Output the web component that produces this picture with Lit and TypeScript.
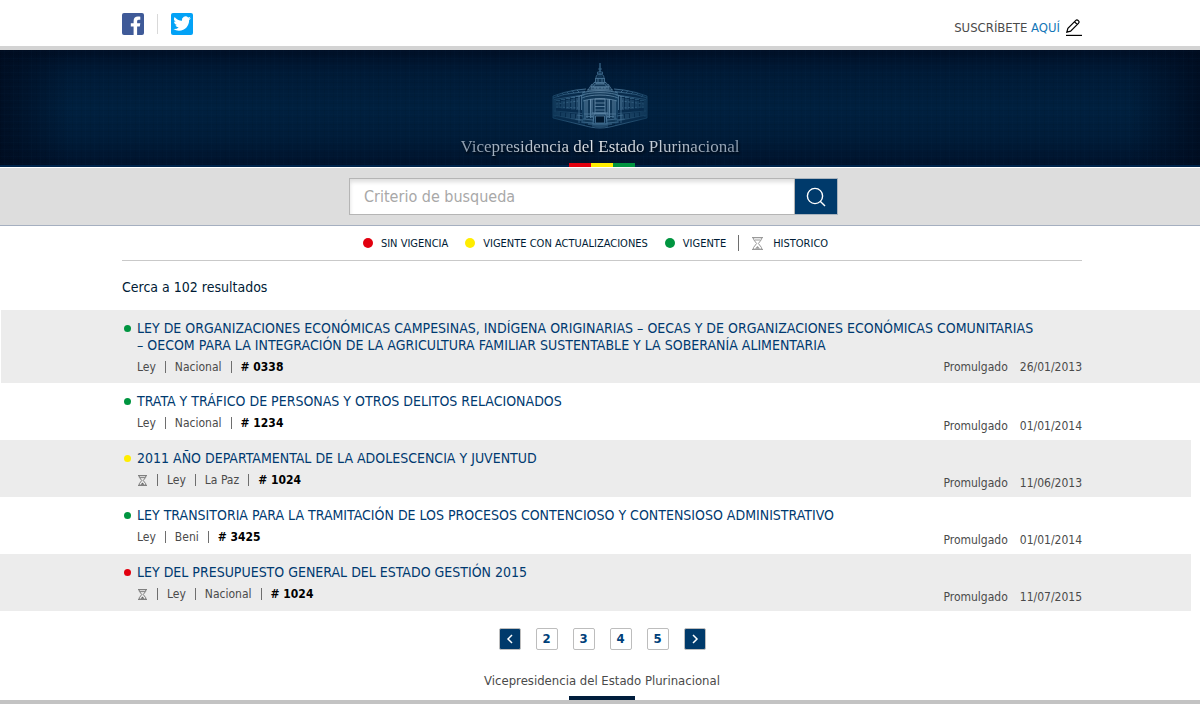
import { LitElement, html, css, svg, nothing } from "lit";
import { customElement, property } from "lit/decorators.js";

type Status = "red" | "yellow" | "green";

interface Law {
  status: Status;
  title: string;
  historic?: boolean;
  scope: string;
  number: string;
  date: string;
}

const LAWS: Law[] = [
  {
    status: "green",
    title:
      "LEY DE ORGANIZACIONES ECONÓMICAS CAMPESINAS, INDÍGENA ORIGINARIAS – OECAS Y DE ORGANIZACIONES ECONÓMICAS COMUNITARIAS – OECOM PARA LA INTEGRACIÓN DE LA AGRICULTURA FAMILIAR SUSTENTABLE Y LA SOBERANÍA ALIMENTARIA",
    scope: "Nacional",
    number: "0338",
    date: "26/01/2013",
  },
  {
    status: "green",
    title: "TRATA Y TRÁFICO DE PERSONAS Y OTROS DELITOS RELACIONADOS",
    scope: "Nacional",
    number: "1234",
    date: "01/01/2014",
  },
  {
    status: "yellow",
    title: "2011 AÑO DEPARTAMENTAL DE LA ADOLESCENCIA Y JUVENTUD",
    historic: true,
    scope: "La Paz",
    number: "1024",
    date: "11/06/2013",
  },
  {
    status: "green",
    title: "LEY TRANSITORIA PARA LA TRAMITACIÓN DE LOS PROCESOS CONTENCIOSO Y CONTENSIOSO ADMINISTRATIVO",
    scope: "Beni",
    number: "3425",
    date: "01/01/2014",
  },
  {
    status: "red",
    title: "LEY DEL PRESUPUESTO GENERAL DEL ESTADO GESTIÓN 2015",
    historic: true,
    scope: "Nacional",
    number: "1024",
    date: "11/07/2015",
  },
];

const hourglass = (size: number) => html`<svg width=${size} height=${size + 2} viewBox="0 0 11 13" fill="none" stroke="currentColor" aria-hidden="true">
  <path d="M0 .6H11M0 12.4H11" stroke-width="1.2" />
  <path d="M1.6 1V2.6L4.6 6.5L1.6 10.4V12M9.4 1V2.6L6.4 6.5L9.4 10.4V12M2.4 3H8.6" />
  <path d="M3 11.8L5.5 9L8 11.8Z" fill="currentColor" stroke="none" />
</svg>`;

@customElement("palace-logo")
class PalaceLogo extends LitElement {
  static styles = css`
    :host { display: block; line-height: 0; }
  `;

  private wing() {
    const windows = [4, 9, 14, 19, 24];
    return svg`
      <path d="M1 33L12 29.5L24 27L33 26V62.5L1 55Z" fill="#16456a" fill-opacity=".35" stroke="none" />
      <path d="M1 33L12 29.5L24 27L34 26M1 35L12 31.5L33 28.5M2 36.5L32 32M1 33V55L32 62.5M3 37V54" />
      <path d="M1 52L31 58M2 48L30 50.5" opacity=".6" />
      ${windows.map((x, i) => svg`
        <path d="M${x + 1} ${39 - i}V${45 + i * 0.5}M${x + 3} ${38.5 - i}V${45 + i * 0.5}M${x + 1} ${49 + i * 0.6}V${53 + i}M${x + 3} ${49 + i * 0.6}V${53 + i}M${x} ${37.5 - i}H${x + 4}" />
      `)}
      <path d="M5 32L7 34M10 30L12 32M15 29L17 31M20 27.5L22 30M25 27L27 29" />
      <path d="M27 33V60M29.5 32V47M25 52L31 53M23 56L31 57" />
      <path d="M4 44L26 45M4 41L26 38" stroke-dasharray="2 1.5" />
    `;
  }

  render() {
    return html`<svg width="96" height="67" viewBox="0 0 96 67" fill="none" stroke="url(#ink)" stroke-width=".8" aria-hidden="true">
      <defs>
        <radialGradient id="ink" gradientUnits="userSpaceOnUse" cx="48" cy="36" r="50">
          <stop offset="0" stop-color="#7a9cb8" />
          <stop offset=".5" stop-color="#426f92" />
          <stop offset="1" stop-color="#164263" />
        </radialGradient>
      </defs>
      <g>${this.wing()}</g>
      <g transform="translate(96 0) scale(-1 1)">${this.wing()}</g>
      <path d="M39 26C41 21 44 15 48 10C52 15 55 21 57 26L66 30V60L48 65L30 60V30Z" fill="#2b5c80" fill-opacity=".4" stroke="none" />
      <path d="M48.01 0L48 9" stroke-width="1.4" />
      <path d="M46 6H50M45.5 9H50.5V11H45.5ZM44 15C44 12 46 11 48 11S52 12 52 15M43 15.5H53M43.5 15.5V19M46 15.5V19M50 15.5V19M52.5 15.5V19" />
      <path d="M42 19.5H54L57 24H39ZM44 21H52M41 24C42 21.5 44 20 48 20S54 21.5 55 24M39 24H57V26H39Z" />
      <path d="M36 27L40 21M60 27L56 21M35 27H61M43 26V24M46 26V24M50 26V24M53 26V24" />
      <path d="M30 30C36 27 60 27 66 30M28 33C36 28.5 60 28.5 68 33M30 35C38 31 58 31 66 35M31 38C38 35 58 35 65 38" />
      <path d="M33 37V56M35 37V55M38.5 36V55M40 36V55M56 36V55M57.5 36V55M61 37V55M63 37V56" stroke-width="1" />
      <path d="M43 36H53V50H43ZM43 40H53M43 43.5H53M43 47H53" />
      <path d="M43.5 53H52.5V60H43.5Z" fill="#00182f" />
      <path d="M42 51H54L55 61H41ZM40 50H56" stroke-width="1.1" />
      <path d="M31 56L41 57M55 57L65 56M29 59L41 60M55 60L67 59M32 62.5C38 64 42 65 48 65S58 64 64 62.5M36 61H60M40 63H56" />
      <path d="M32 51H41M55 51H64M34 53.5H41M55 53.5H62" />
    </svg>`;
  }
}

@customElement("law-item")
class LawItem extends LitElement {
  @property({ attribute: false }) law!: Law;

  static styles = css`
    :host { display: block; box-sizing: border-box; min-height: 57px; padding: 10px 0 6px; }
    .wrap {
      box-sizing: border-box; width: 100%; max-width: 964px; margin: 0 auto; padding-left: 4px;
      display: grid; grid-template-columns: 1fr auto; row-gap: 3px;
    }
    .heading { grid-column: 1 / -1; display: flex; align-items: flex-start; padding-right: 42px; }
    .dot { flex: none; width: 7px; height: 7px; margin: 5px 6px 0 2px; border-radius: 50%; }
    .green { background: #009540; }
    .yellow { background: #ffed00; }
    .red { background: #e2000f; }
    h2 { margin: 0; font-size: 14px; line-height: 17px; font-weight: 400; }
    a { color: #003a70; text-decoration: none; }
    .meta { display: flex; align-items: center; margin: 0; padding: 0 0 0 15px; list-style: none; line-height: 20px; }
    li { display: flex; align-items: center; }
    li + li::before { content: ""; width: 1px; height: 12px; margin: 0 9px; background: #6e6e6e; }
    b { color: #000; }
    .date { margin: 0; display: flex; gap: 12px; line-height: 14px; align-self: end; }
    :host(:first-child) .date { line-height: 20px; }
    svg { display: block; margin: 0 1px; color: #666; }
  `;

  render() {
    const l = this.law;
    return html`<div class="wrap">
      <div class="heading"><span class="dot ${l.status}"></span><h2><a href="#">${l.title}</a></h2></div>
      <ul class="meta">
        ${l.historic ? html`<li>${hourglass(9)}</li>` : nothing}
        <li>Ley</li>
        <li>${l.scope}</li>
        <li><b># ${l.number}</b></li>
      </ul>
      <p class="date"><span>Promulgado</span><time>${l.date}</time></p>
    </div>`;
  }
}

@customElement("app-root")
class AppRoot extends LitElement {
  static styles = css`
    :host {
      display: flex; flex-direction: column; min-height: 100vh; background: #fff; color: #4a4a4a;
      font-family: "DejaVu Sans Condensed", "DejaVu Sans", sans-serif; font-size: 12px;
    }
    .wrap { box-sizing: border-box; width: 100%; max-width: 964px; margin: 0 auto; padding-left: 4px; }
    a { text-decoration: none; }
    svg { display: block; }

    .topbar { border-bottom: 4px solid #d3d3d3; }
    .topbar .wrap { display: flex; align-items: center; height: 46px; }
    .social { display: flex; align-items: center; gap: 13px; flex: 1; padding-top: 2px; }
    .rule { width: 1px; height: 20px; background: #d9d9d9; }
    .subscribe { display: flex; align-items: center; gap: 6px; font-size: 13px; padding-top: 8px; }
    .subscribe a { color: #1477b8; }

    .banner {
      display: flex; flex-direction: column; align-items: center; border-bottom: 1px solid #fff; padding-top: 13px;
      background:
        linear-gradient(transparent 98%, #00254c 98%),
        repeating-linear-gradient(0deg, #0000000c 0 1px, transparent 1px 3px, #1a4a740a 3px 4px, transparent 4px 7px),
        repeating-linear-gradient(90deg, #0000000c 0 1px, transparent 1px 4px, #1a4a740a 4px 5px, transparent 5px 9px),
        linear-gradient(90deg, #000b1ecc 0, transparent 6%, transparent 94%, #000b1ecc 100%),
        linear-gradient(#000f26 0, #001a36 18%, #00203f 50%, #001c39 75%, #00122b 100%);
    }
    .banner h1 {
      margin: 6px 0 5px; font: 400 17px/22px "Liberation Serif", serif; color: transparent;
      background: linear-gradient(90deg, #8c9db0, #e6eaee 50%, #8c9db0); background-clip: text; -webkit-background-clip: text;
      filter: drop-shadow(1px 2px 1px #000a);
    }
    .flag { display: flex; width: 66px; height: 4px; margin-left: 4px; }
    .flag span { flex: 1; }
    .red { background: #e2000f; }
    .yellow { background: #ffed00; }
    .green { background: #009540; }

    .search { background: #dddddd; border-bottom: 1px solid #a5afc0; padding: 10px 0; }
    .search form { display: flex; width: 489px; max-width: 100%; margin: 0 auto; padding-right: 17px; }
    .search input {
      box-sizing: border-box; flex: 1; min-width: 0; height: 37px; padding: 0 14px; border: 1px solid #b5b5b5;
      border-radius: 0; background: #fff; box-shadow: inset 1px 4px 4px -1px #0002; font: inherit; font-size: 16px;
      color: #333; outline: none;
    }
    .search input::placeholder { color: #a8a8a8; opacity: 1; }
    .search button {
      box-sizing: border-box; display: grid; place-items: center; width: 43px; height: 37px; padding: 0;
      border: 1px solid #a9b3bd; border-left: 0; background: #003a6b; color: #fff;
    }

    .legend {
      display: flex; justify-content: center; align-items: center; height: 34px; margin: 0; padding: 0 13px 0 0;
      list-style: none; border-bottom: 1px solid #c9c9c9; font-size: 11px; color: #001b35;
    }
    .legend li { display: flex; align-items: center; gap: 8px; margin-right: 17px; }
    .legend .dot { width: 10px; height: 10px; border-radius: 50%; }
    .legend li:nth-child(3) { margin-right: 12px; }
    .legend li:last-child { gap: 10px; margin: 0; padding-left: 13px; border-left: 1px solid #6e6e6e; height: 16px; }
    .legend svg { color: #9a9a9a; }

    .count { margin: 0; padding: 17px 0 13px; font-size: 14px; line-height: 19px; color: #001b35; }
    law-item:nth-child(odd) { background: #ececec; margin-right: 9px; padding-left: 9px; }
    law-item:first-child { margin: 0 0 0 1px; padding-left: 0; padding-right: 1px; }

    .pages { display: flex; justify-content: center; gap: 15px; padding-top: 17px; }
    .pages a {
      box-sizing: border-box; width: 22px; height: 22px; display: grid; place-items: center; border: 1px solid #bdbdbd;
      border-radius: 2px; color: #00407a; font-weight: 700; font-size: 13px; line-height: 20px;
    }
    .pages .step { background: #003a6b; color: #fff; }

    footer { margin-top: auto; border-bottom: 4px solid #c3c3c3; font-size: 13px; line-height: 18px; }
    footer .wrap { display: flex; flex-direction: column; align-items: center; gap: 6px; }
    .tab { width: 66px; height: 4px; background: #001d3c; }
  `;

  render() {
    return html`
      <div class="topbar"><div class="wrap">
        <div class="social">
          <a href="#" aria-label="Facebook"><svg width="22" height="22" viewBox="0 0 22 22">
            <rect width="22" height="22" rx="2" fill="#3f5a98" />
            <path fill="#fff" d="M11.6 22V13.6H8.8V10.2H11.6V8C11.6 5 13.4 3.6 16 3.6C17.1 3.6 17.9 3.7 18.3 3.8V6.8H16.8C15.5 6.8 15.1 7.5 15.1 8.5V10.2H18.3L17.8 13.6H15.1V22Z" />
          </svg></a>
          <span class="rule"></span>
          <a href="#" aria-label="Twitter"><svg width="22" height="22" viewBox="0 0 22 22">
            <rect width="22" height="22" rx="2" fill="#03a2f6" />
            <path fill="#fff" transform="translate(2.4 1.8) scale(.73)" d="M23.95 4.57a10 10 0 0 1-2.82.77 4.96 4.96 0 0 0 2.16-2.72c-.95.55-2 .95-3.13 1.18a4.92 4.92 0 0 0-8.38 4.48C7.69 8.1 4.07 6.13 1.64 3.16a4.92 4.92 0 0 0 1.52 6.57 4.9 4.9 0 0 1-2.23-.61v.06a4.92 4.92 0 0 0 3.95 4.83 5 5 0 0 1-2.21.08 4.94 4.94 0 0 0 4.6 3.42A9.87 9.87 0 0 1 0 19.54a13.99 13.99 0 0 0 7.55 2.21c9.05 0 14-7.5 14-13.98 0-.21 0-.42-.02-.63a9.94 9.94 0 0 0 2.46-2.55z" />
          </svg></a>
        </div>
        <div class="subscribe">
          <span>SUSCRÍBETE <a href="#">AQUÍ</a></span>
          <svg width="16" height="17" viewBox="0 0 16 17" fill="none" stroke="#000" stroke-width="1.2" aria-hidden="true">
            <path d="M.8 13.2L1.9 9.4L9.6 1.6C10.4 .8 11.4 .8 12.1 1.5L12.5 1.9C13.2 2.6 13.2 3.6 12.4 4.4L4.6 12.1ZM8.6 2.8L11.3 5.5" />
            <path d="M0 16.4H16" />
          </svg>
        </div>
      </div></div>

      <header class="banner">
        <palace-logo></palace-logo>
        <h1>Vicepresidencia del Estado Plurinacional</h1>
        <div class="flag"><span class="red"></span><span class="yellow"></span><span class="green"></span></div>
      </header>

      <div class="search"><div class="wrap">
        <form @submit=${(e: Event) => e.preventDefault()}>
          <input type="search" aria-label="Criterio de busqueda" placeholder="Criterio de busqueda" />
          <button aria-label="Buscar"><svg width="20" height="20" viewBox="0 0 20 20" fill="none" stroke="currentColor" stroke-width="1.4">
            <circle cx="9" cy="9" r="7.6" /><path d="M14.2 14.2L19 19" />
          </svg></button>
        </form>
      </div></div>

      <div class="wrap">
        <ul class="legend">
          <li><span class="dot red"></span>SIN VIGENCIA</li>
          <li><span class="dot yellow"></span>VIGENTE CON ACTUALIZACIONES</li>
          <li><span class="dot green"></span>VIGENTE</li>
          <li>${hourglass(11)}HISTORICO</li>
        </ul>
        <p class="count">Cerca a 102 resultados</p>
      </div>

      <main>${LAWS.map((law) => html`<law-item .law=${law}></law-item>`)}</main>

      <nav class="wrap pages" aria-label="Páginas">
        <a class="step" href="#" aria-label="Anterior"><svg width="8" height="10" viewBox="0 0 8 10" fill="none" stroke="currentColor" stroke-width="1.5"><path d="M6 1L2 5L6 9" /></svg></a>
        ${[2, 3, 4, 5].map((n) => html`<a href="#">${n}</a>`)}
        <a class="step" href="#" aria-label="Siguiente"><svg width="8" height="10" viewBox="0 0 8 10" fill="none" stroke="currentColor" stroke-width="1.5"><path d="M2 1L6 5L2 9" /></svg></a>
      </nav>

      <footer><div class="wrap">
        <span>Vicepresidencia del Estado Plurinacional</span>
        <div class="tab"></div>
      </div></footer>
    `;
  }
}
